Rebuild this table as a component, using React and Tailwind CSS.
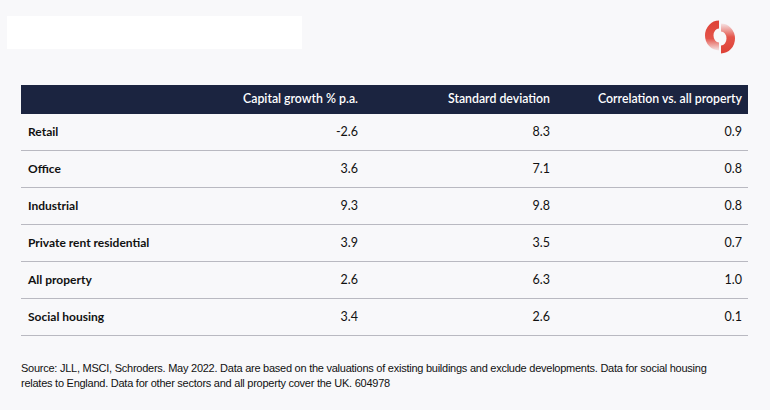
import React from 'react'

const ROWS = [
  ['Retail', '-2.6', '8.3', '0.9'],
  ['Office', '3.6', '7.1', '0.8'],
  ['Industrial', '9.3', '9.8', '0.8'],
  ['Private rent residential', '3.9', '3.5', '0.7'],
  ['All property', '2.6', '6.3', '1.0'],
  ['Social housing', '3.4', '2.6', '0.1'],
]

// Anneau rouge en deux demi-arcs dégradés
function Logo() {
  return (
    <svg width="40" height="40" viewBox="0 0 40 40">
      <defs>
        <linearGradient id="lg" x1="0" y1="0" x2="0" y2="1">
          <stop offset="0" stopColor="#de4136" />
          <stop offset="0.6" stopColor="#e4544a" />
          <stop offset="1" stopColor="#e4544a" stopOpacity="0.12" />
        </linearGradient>
        <linearGradient id="rg" x1="0" y1="0" x2="0" y2="1">
          <stop offset="0" stopColor="#e4544a" stopOpacity="0.12" />
          <stop offset="0.45" stopColor="#e4544a" />
          <stop offset="1" stopColor="#de4136" />
        </linearGradient>
      </defs>
      <path d="M19 3.5 A14 15 0 0 0 19 33.5 L19 25.5 A5.5 7 0 0 1 19 11.5 Z" fill="url(#lg)" />
      <path d="M21 6.5 A14 15 0 0 1 21 36.5 L21 28.5 A5.5 7 0 0 0 21 14.5 Z" fill="url(#rg)" />
    </svg>
  )
}

export default function App() {
  return (
    <div className="w-[770px] h-[410px] bg-[#f8f8fa] relative overflow-hidden" style={{ fontFamily: 'Lato, "Noto Sans", sans-serif' }}>
      <div className="flex items-start justify-between h-[33px] pl-[7px] pr-[30px] mt-4">
        <div className="w-[295px] h-[33px] bg-white" />
        <div className="mt-[1px]">
          <Logo />
        </div>
      </div>

      <div className="mx-[21px] mt-[36px] w-[727px]">
        <div className="grid grid-cols-[151px_192px_192px_192px] h-[29px] bg-[#1b2440] text-white text-[12.3px] font-semibold items-center">
          <div />
          <div className="text-right pr-[6px]">Capital growth % p.a.</div>
          <div className="text-right pr-[6px]">Standard deviation</div>
          <div className="text-right pr-[6px]">Correlation vs. all property</div>
        </div>
        {ROWS.map((r) => (
          <div key={r[0]} className="grid grid-cols-[151px_192px_192px_192px] h-[37px] items-center border-b border-[#b9b9c1] text-[#111]">
            <div className="pl-[7px] font-bold text-[12px] whitespace-nowrap">{r[0]}</div>
            <div className="text-right pr-[6px] text-[12.5px]">{r[1]}</div>
            <div className="text-right pr-[6px] text-[12.5px]">{r[2]}</div>
            <div className="text-right pr-[6px] text-[12.5px]">{r[3]}</div>
          </div>
        ))}
      </div>

      <p className="mx-[21px] mt-[25px] w-[700px] text-[11px] leading-[15px] text-[#111] tracking-[-0.25px]" style={{ fontFamily: '"Liberation Sans", Arial, sans-serif' }}>
        Source: JLL, MSCI, Schroders. May 2022. Data are based on the valuations of existing buildings and exclude developments. Data for social housing relates to England. Data for other sectors and all property cover the UK. 604978
      </p>
    </div>
  )
}
